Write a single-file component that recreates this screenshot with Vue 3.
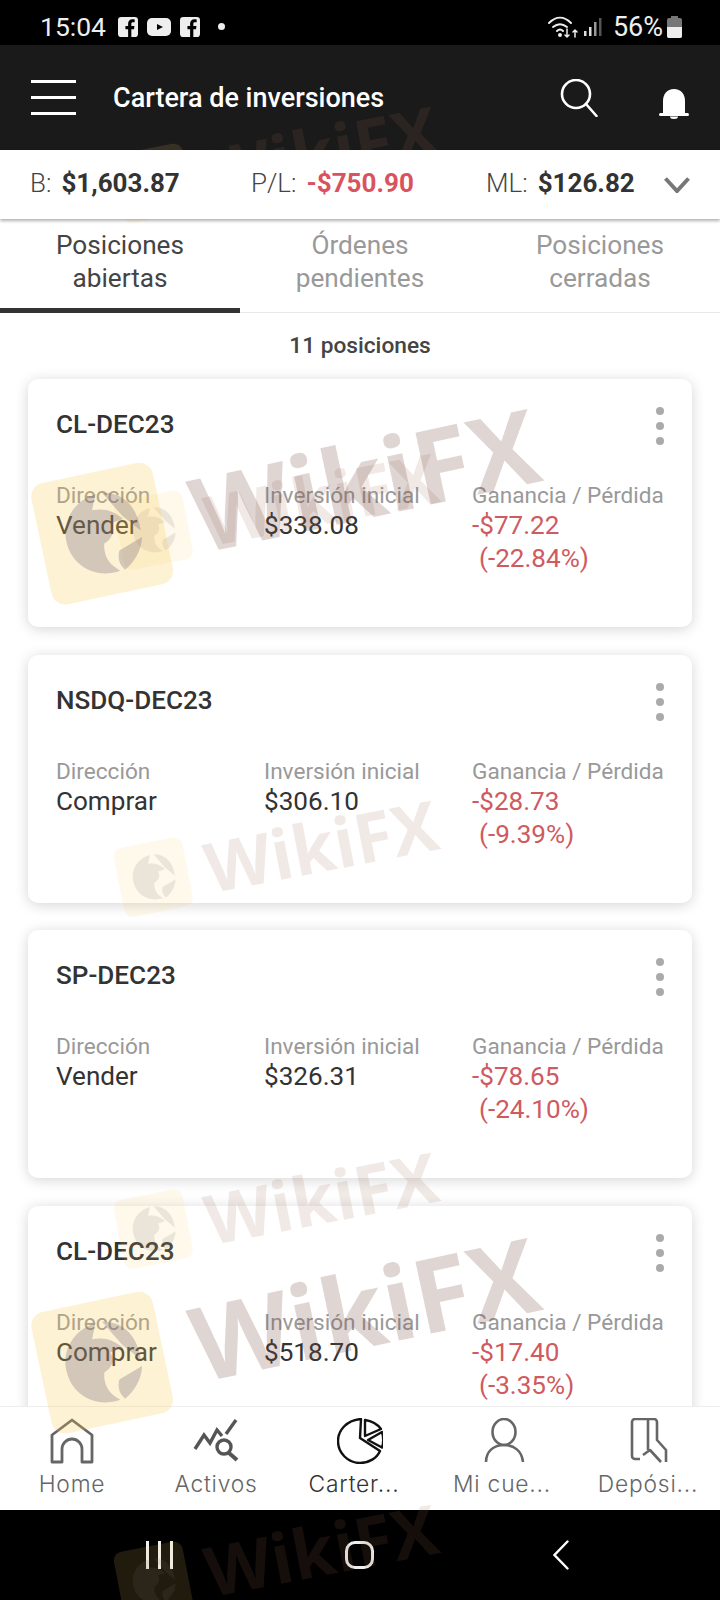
<template>
  <div class="phone">
    <div class="status">
      <span class="time">15:04</span>
      <svg class="app-ic" viewBox="0 0 18 18"><rect width="18" height="18" rx="3" fill="#eee" /><path d="M12 18v-7h2.4l.4-3H12V6.2c0-.9.3-1.4 1.4-1.4H15V2.200C14.600 2.100 13.800 2 13 2c-2.300 0-3.900 1.400-3.900 4v2H6.700v3h2.400v7z" fill="#000" /></svg>
      <svg class="app-ic wide" viewBox="0 0 24 18"><rect width="24" height="18" rx="5" fill="#eee" /><path d="M10 6l6 3-6 3z" fill="#000" /></svg>
      <svg class="app-ic" viewBox="0 0 18 18"><rect width="18" height="18" rx="3" fill="#eee" /><path d="M12 18v-7h2.4l.4-3H12V6.2c0-.9.3-1.4 1.4-1.4H15V2.200C14.600 2.100 13.800 2 13 2c-2.300 0-3.900 1.400-3.900 4v2H6.700v3h2.400v7z" fill="#000" /></svg>
      <span class="dot"></span>
      <span class="spacer"></span>
      <svg class="wifi" viewBox="0 0 30 24" fill="none" stroke="#eee" stroke-width="2" stroke-linecap="round">
        <path d="M1 8c7-7 15-7 22 0" />
        <path d="M5 12c5-4 9-4 14 0" />
        <path d="M9 16c2-2 4-2 6 0" />
        <circle cx="12" cy="20" r="1" />
        <path d="M19 14v8M19 22l-2-2M19 22l2-2M27 22v-7M27 15l-2 2M27 15l2 2" stroke-width="1.500" />
      </svg>
      <svg class="signal" viewBox="0 0 18 20" fill="#ddd"><rect x="0" y="14" width="2.500" height="5" /><rect x="5" y="10" width="2.500" height="9" /><rect x="10" y="5" width="2.500" height="14" fill="#999" /><rect x="15" y="1" width="2.500" height="18" fill="#555" /></svg>
      <span class="pct">56%</span>
      <svg class="batt" viewBox="0 0 15 22"><rect x="4" y="0" width="7" height="3" fill="#777" /><rect x="0" y="2" width="15" height="20" rx="2" fill="#777" /><path d="M0 11h15v9a2 2 0 0 1-2 2H2a2 2 0 0 1-2-2z" fill="#eee" /></svg>
    </div>

    <header class="top">
      <div class="burger"><i></i><i></i><i></i></div>
      <h1>Cartera de inversiones</h1>
      <svg class="search" viewBox="0 0 38 38" fill="none" stroke="#fff" stroke-width="2.600" stroke-linecap="round"><circle cx="16" cy="15" r="14" /><path d="M26 25l10.500 12" /></svg>
      <svg class="bell" viewBox="0 0 30 30" fill="#fff"><path d="M15 0C8 0 4 5 4 12v13h22V12C26 5 22 0 15 0z" /><rect x="0" y="24" width="30" height="3" rx="1.500" /><path d="M11 27.500h8a4 2.500 0 0 1-8 0z" /></svg>
    </header>

    <div class="summary">
      <span class="sum b">B:<b>$1,603.87</b></span>
      <span class="sum pl">P/L:<b class="neg">-$750.90</b></span>
      <span class="sum ml">ML:<b>$126.82</b></span>
      <svg class="chev" viewBox="0 0 26 16" fill="none" stroke="#777" stroke-width="4"><path d="M1.500 1.500L13 14 24.500 1.500" /></svg>
    </div>

    <nav class="tabs">
      <div v-for="(t, i) in tabs" :key="t" class="tab" :class="{ active: i === 0 }">{{ t }}</div>
    </nav>

    <div class="count">11 posiciones</div>

    <main class="list">
      <section v-for="(p, i) in positions" :key="i" class="card">
        <div class="card-head">
          <h2>{{ p.name }}</h2>
          <div class="more"><i></i><i></i><i></i></div>
        </div>
        <div class="cols">
          <div class="col c1"><label>Dirección</label><p>{{ p.dir }}</p></div>
          <div class="col c2"><label>Inversión inicial</label><p>{{ p.inv }}</p></div>
          <div class="col c3"><label>Ganancia / Pérdida</label><p class="neg">{{ p.pl }}<br /><span class="pc">({{ p.pc }})</span></p></div>
        </div>
      </section>
    </main>

    <footer class="bottom">
      <div class="item">
        <svg viewBox="0 0 46 46" fill="none" stroke="#666" stroke-width="2.800" stroke-linejoin="round"><path d="M3 44V17L23 2l20 15v27H33V31a10 10 0 0 0-20 0v13z" /></svg>
        <span>Home</span>
      </div>
      <div class="item">
        <svg viewBox="0 0 46 46" fill="none" stroke="#555" stroke-width="3.400"><path d="M2 31l9-14 6 8 7-13 5 6" /><path d="M33 16L43 2" /><circle cx="31" cy="29" r="7" /><path d="M36 35l8 7" stroke-width="4" /></svg>
        <span>Activos</span>
      </div>
      <div class="item on">
        <svg viewBox="0 0 46 46" fill="none" stroke="#111" stroke-width="2.400" stroke-linejoin="round"><path d="M24 1C10 2 1 12 1 23c0 12 10 22 22 22 9 0 17-5 20-12L23 20z" /><path d="M28 2c7 1 13 5 16 9L28 18z" /><path d="M45 14c1.500 5 1.500 11 0 15.500L31 22z" /></svg>
        <span>Carter...</span>
      </div>
      <div class="item cut">
        <svg viewBox="0 0 46 46" fill="none" stroke="#666" stroke-width="2.600"><ellipse cx="23" cy="14" rx="11.500" ry="13" /><path d="M5 44c0-11 8-17 18-17s18 6 19 17" /></svg>
        <span>Mi cue...</span>
      </div>
      <div class="item">
        <svg viewBox="0 0 46 46" fill="none" stroke="#666" stroke-width="2.600" stroke-linejoin="round"><path d="M15 41h-5a3 3 0 0 1-3-3V4a3 3 0 0 1 3-3h19a3 3 0 0 1 3 3v18l9 10v12" /><path d="M23 2v30" /><path d="M18 37l7-5 11 12" /></svg>
        <span>Depósi...</span>
      </div>
    </footer>

    <div class="sysnav">
      <div class="recents"><i></i><i></i><i></i></div>
      <div class="homebtn"></div>
      <svg class="back" viewBox="0 0 16 30" fill="none" stroke="#fff" stroke-width="2.400" stroke-linecap="round"><path d="M14.500 1.500L1.500 15l13 13.500" /></svg>
    </div>

    <div v-for="m in marks" :key="m" class="mark" :class="m">
      <span class="tile">
        <svg viewBox="0 0 60 60">
          <path d="M8 30C8 17 18 7 31 6l-4 9c7 0 13 3 17 9l-8 1c2 4 0 9-6 11-2 7 0 13 6 18C20 56 8 45 8 30z" />
          <path d="M35 6c12 2 19 12 18 27l-9-11z" />
          <path d="M53 37c-2 8-8 14-14 17-3-4-3-8-1-12z" />
        </svg>
      </span>
      <span class="word">WikiFX</span>
    </div>
  </div>
</template>

<script setup>
const tabs = ['Posiciones abiertas', 'Órdenes pendientes', 'Posiciones cerradas']

const positions = [
  { name: 'CL-DEC23', dir: 'Vender', inv: '$338.08', pl: '-$77.22', pc: '-22.84%' },
  { name: 'NSDQ-DEC23', dir: 'Comprar', inv: '$306.10', pl: '-$28.73', pc: '-9.39%' },
  { name: 'SP-DEC23', dir: 'Vender', inv: '$326.31', pl: '-$78.65', pc: '-24.10%' },
  { name: 'CL-DEC23', dir: 'Comprar', inv: '$518.70', pl: '-$17.40', pc: '-3.35%' },
]

// watermark stamps laid over the whole screenshot
const marks = ['small y1', 'small y2', 'big y3', 'small y4', 'small y5', 'big y6', 'small y7']
</script>

<style scoped>
.phone {
  position: relative;
  width: 720px;
  height: 1600px;
  overflow: hidden;
  display: flex;
  flex-direction: column;
  background: #fff;
  font-family: Roboto, "Liberation Sans", sans-serif;
  color: #333;
}

.status {
  height: 45px;
  flex: none;
  box-sizing: border-box;
  padding: 8px 38px 0 40px;
  background: #000;
  color: #eee;
  display: flex;
  align-items: center;
}

.time {
  font-size: 26.500px;
  margin-right: 12px;
}

.app-ic {
  width: 20px;
  height: 20px;
  margin-right: 9px;
}

.app-ic.wide {
  width: 24px;
}

.dot {
  width: 7px;
  height: 7px;
  border-radius: 50%;
  background: #eee;
  margin-left: 9px;
}

.spacer {
  flex: 1;
}

.wifi {
  width: 30px;
  height: 24px;
}

.signal {
  width: 18px;
  height: 20px;
  margin-left: 6px;
}

.pct {
  font-size: 27px;
  margin-left: 11px;
}

.batt {
  width: 15px;
  height: 22px;
  margin-left: 4px;
}

.top {
  height: 105px;
  flex: none;
  background: #1a1a1a;
  display: flex;
  align-items: center;
  padding: 0 31px;
}

.burger {
  width: 45px;
  display: flex;
  flex-direction: column;
  gap: 13px;
  margin-right: 37px;
}

.burger i {
  display: block;
  height: 3px;
  background: #fff;
}

h1 {
  flex: 1;
  margin: 0;
  font-size: 27px;
  font-weight: 500;
  color: #fff;
}

.search {
  width: 38px;
  height: 38px;
  margin-right: 61px;
}

.bell {
  width: 30px;
  height: 30px;
  margin-top: 13px;
}

.summary {
  position: relative;
  z-index: 1;
  height: 69px;
  flex: none;
  box-sizing: border-box;
  display: flex;
  align-items: center;
  padding: 0 0 3px 30px;
  font-size: 26px;
  font-weight: 300;
  color: #444;
  box-shadow: 0 2px 3px rgba(0, 0, 0, 0.3);
  background: #fff;
}

.sum {
  flex: none;
  white-space: nowrap;
}

.sum b {
  font-weight: 700;
  margin-left: 10px;
  color: #333;
}

.sum b.neg {
  color: #d9535f;
}

.sum.b {
  width: 221px;
}

.sum.pl {
  width: 235px;
}

.sum.ml {
  width: 178px;
}

.chev {
  width: 26px;
  height: 16px;
  margin-top: 3px;
}

.tabs {
  height: 94px;
  flex: none;
  display: grid;
  grid-template-columns: repeat(3, 240px);
  border-bottom: 1px solid #e8e8e8;
  box-sizing: border-box;
}

.tab {
  padding: 10px 40px 0;
  text-align: center;
  font-size: 26.200px;
  line-height: 33px;
  color: #999;
  box-sizing: border-box;
}

.tab.active {
  color: #444;
  border-bottom: 5px solid #333;
  height: 94px;
}

.count {
  height: 66px;
  flex: none;
  margin-bottom: -20px;
  padding-bottom: 2px;
  box-sizing: border-box;
  display: flex;
  align-items: center;
  justify-content: center;
  font-size: 22.700px;
  font-weight: 500;
  color: #444;
}

.list {
  flex: 1;
  min-height: 0;
  overflow: hidden;
  padding: 20px 28px 0;
  display: flex;
  flex-direction: column;
  gap: 27.600px;
}

.card {
  flex: none;
  height: 248px;
  box-sizing: border-box;
  padding: 28px 28px 0;
  background: #fff;
  border-radius: 10px;
  box-shadow: 0 2px 14px rgba(0, 0, 0, 0.17);
}

.card-head {
  display: flex;
  justify-content: space-between;
  align-items: flex-start;
  height: 69px;
}

h2 {
  margin: 0;
  font-size: 26.100px;
  line-height: 34px;
  font-weight: 500;
  color: #333;
}

.more {
  display: flex;
  flex-direction: column;
  gap: 7px;
}

.more i {
  display: block;
  width: 8px;
  height: 8px;
  border-radius: 50%;
  background: #aaa;
}

.cols {
  display: flex;
  margin-top: 7px;
}

.col label {
  display: block;
  font-size: 22.600px;
  line-height: 26px;
  color: #999;
  white-space: nowrap;
}

.col p {
  margin: 0;
  font-size: 26.100px;
  line-height: 33px;
  color: #333;
}

.col p.neg {
  color: #cf5a60;
}

.pc {
  margin-left: 7px;
}

.c1,
.c2 {
  width: 208px;
}

.bottom {
  height: 104px;
  flex: none;
  display: grid;
  grid-template-columns: repeat(5, 144px);
  background: #fff;
  border-top: 1px solid #eee;
  box-sizing: border-box;
}

.item {
  display: flex;
  flex-direction: column;
  align-items: center;
  padding-top: 11px;
  color: #666;
  font-family: Inter, "Liberation Sans", sans-serif;
  font-size: 22.800px;
  font-weight: 300;
  letter-spacing: 0.8px;
  white-space: nowrap;
}

.item svg {
  width: 46px;
  height: 46px;
  margin-bottom: 6px;
}

.item.on {
  color: #333;
}

/* truncated labels sit left of the icon's centre */
.item.on span {
  margin-right: 12px;
}

.item.cut span {
  margin-right: 4px;
}

.sysnav {
  height: 90px;
  flex: none;
  background: #000;
  display: flex;
  align-items: center;
}

.recents {
  display: flex;
  gap: 9px;
  margin-left: 146px;
}

.recents i {
  display: block;
  width: 3px;
  height: 28px;
  background: #eee;
}

.homebtn {
  width: 29px;
  height: 28px;
  border: 3px solid #eee;
  border-radius: 10px;
  margin-left: 172px;
  box-sizing: border-box;
}

.back {
  width: 16px;
  height: 30px;
  margin-left: 179px;
}

.mark {
  position: absolute;
  display: flex;
  align-items: center;
  pointer-events: none;
  color: rgba(150, 100, 80, 0.14);
  font-family: "Open Sans", "Liberation Sans", sans-serif;
  font-weight: 700;
}

.tile {
  display: flex;
  align-items: center;
  justify-content: center;
  background: rgba(250, 205, 90, 0.13);
}

.tile svg {
  fill: rgba(120, 105, 110, 0.14);
}

.word {
  line-height: 1;
}

.mark.small {
  left: 116px;
  font-size: 69px;
  transform: rotate(-11deg);
}

.mark.small .tile {
  width: 70px;
  height: 70px;
  border-radius: 9px;
  margin-right: 18px;
}

.mark.small svg {
  width: 56px;
  height: 56px;
}

.mark.big {
  left: 36px;
  font-size: 103px;
  color: rgba(120, 80, 70, 0.24);
  transform: rotate(-12deg);
}

.mark.big .tile {
  width: 124px;
  height: 124px;
  border-radius: 14px;
  margin-right: 30px;
  background: rgba(250, 200, 80, 0.24);
}

.mark.big svg {
  width: 100px;
  height: 100px;
  fill: rgba(110, 100, 120, 0.3);
}

.y1 { top: 124px; }
.y2 { top: 471px; }
.y3 { top: 432px; }
.y4 { top: 818px; }
.y5 { top: 1170px; }
.y6 { top: 1261px; }
.y7 { top: 1522px; }
</style>
